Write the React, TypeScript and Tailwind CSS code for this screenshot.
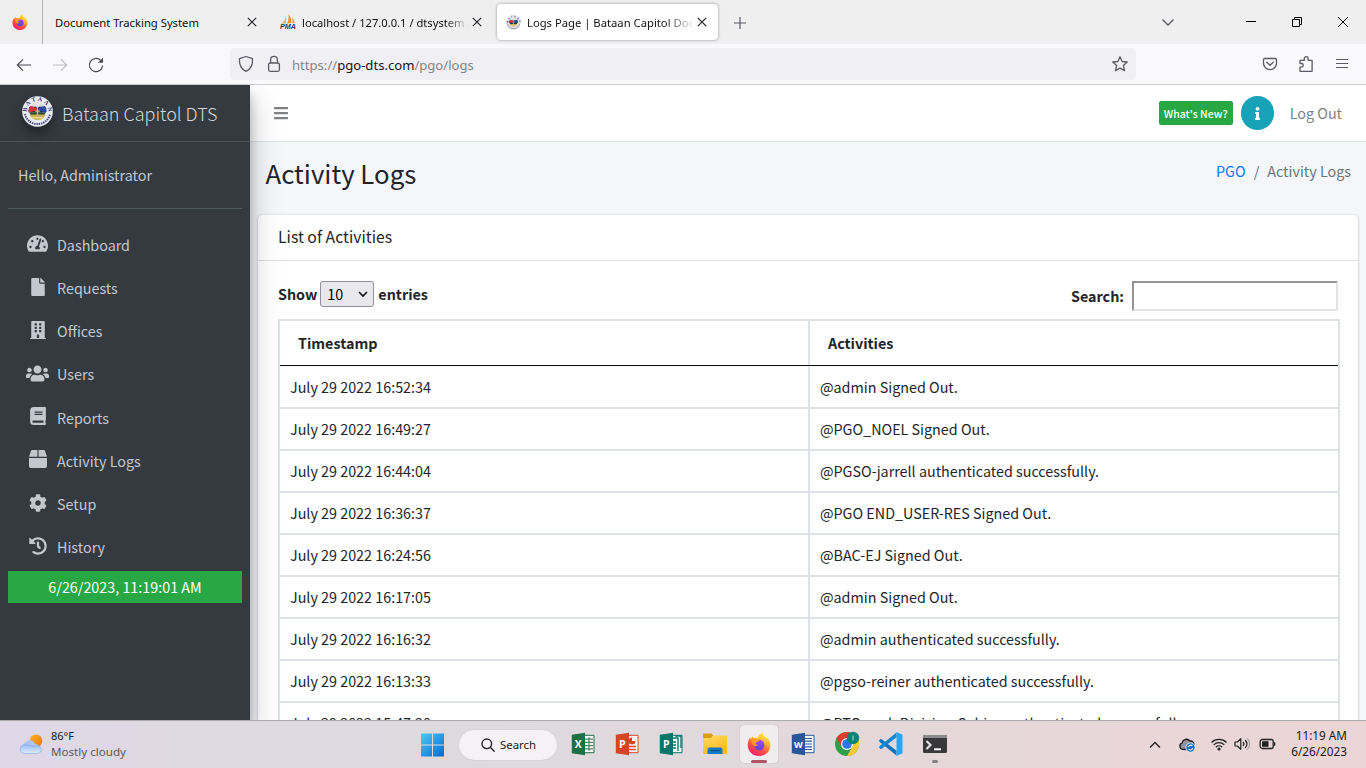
import type { ReactNode } from "react";
import {
  FaBars, FaBook, FaBox, FaBuilding, FaCog, FaFile, FaHistory, FaInfo, FaTachometerAlt, FaUsers,
} from "react-icons/fa";

const logs: [string, string][] = [
  ["July 29 2022 16:52:34", "@admin Signed Out."],
  ["July 29 2022 16:49:27", "@PGO_NOEL Signed Out."],
  ["July 29 2022 16:44:04", "@PGSO-jarrell authenticated successfully."],
  ["July 29 2022 16:36:37", "@PGO END_USER-RES Signed Out."],
  ["July 29 2022 16:24:56", "@BAC-EJ Signed Out."],
  ["July 29 2022 16:17:05", "@admin Signed Out."],
  ["July 29 2022 16:16:32", "@admin authenticated successfully."],
  ["July 29 2022 16:13:33", "@pgso-reiner authenticated successfully."],
  ["July 29 2022 15:47:20", "@PTO-cash Division-Sabina authenticated successfully."],
];

const menu: [string, ReactNode][] = [
  ["Dashboard", <FaTachometerAlt size={21} />],
  ["Requests", <FaFile size={18} />],
  ["Offices", <FaBuilding size={18} />],
  ["Users", <FaUsers size={23} />],
  ["Reports", <FaBook size={18} />],
  ["Activity Logs", <FaBox size={18} />],
  ["Setup", <FaCog size={18} />],
  ["History", <FaHistory size={18} />],
];

function Firefox({ size, id }: { size: number; id: string }) {
  return (
    <svg width={size} height={size} viewBox="0 0 24 24">
      <defs>
        <linearGradient id={id + "a"} x1="0.8" y1="0.05" x2="0.25" y2="1">
          <stop offset="0" stopColor="#fff04a" />
          <stop offset="0.32" stopColor="#ffb52e" />
          <stop offset="0.6" stopColor="#ff5a36" />
          <stop offset="1" stopColor="#f0187c" />
        </linearGradient>
        <linearGradient id={id + "b"} x1="0.6" y1="0" x2="0.4" y2="1">
          <stop offset="0" stopColor="#a34bea" />
          <stop offset="1" stopColor="#5b43d8" />
        </linearGradient>
      </defs>
      <path d="M15.6.6c-.5 2.3 2.4 3.5 4.2 6.1-.1-.9-.4-1.7-.8-2.3 2.7 2 4.4 5.2 4.4 8.8C23.4 19.200 18.400 24 12 24S.7 19.200.7 13c0-3.200 1.100-5.900 2.700-7.800L3.700 7.400l1.800-3.200.8 2.300c1.300-.7 3-.8 4.300-.3C11.700 3.500 13.400 1.400 15.600.6z" fill={`url(#${id}a)`} />
      <circle cx="12.200" cy="13" r="5.200" fill={`url(#${id}b)`} />
      <path d="M3.900 7.200c2.100-.9 4.300-.4 5.500.7 1.300-.3 2.800 0 3.400.6-1.200 1.400-3.500 1.500-4.200 2.800-.4.900.9 1.600 2.300 1.400-.6 1.200-2.300 1.600-3.900 1.100C5.500 12.600 4.300 9.800 3.900 7.200z" fill="#ff9a22" />
    </svg>
  );
}

function Seal({ size, id }: { size: number; id: string }) {
  return (
    <svg width={size} height={size} viewBox="0 0 32 32">
      <defs>
        <path id={id + "t"} d="M5.100 17.500a11 11 0 1 1 21.800 0" />
        <path id={id + "u"} d="M2.200 17a13.800 13.800 0 0 0 27.600 0" />
        <clipPath id={id + "c"}><circle cx="16" cy="15.600" r="9.200" /></clipPath>
      </defs>
      <circle cx="16" cy="16" r="15.800" fill="#e9eaf0" />
      <text fontFamily="Liberation Serif, serif" fontSize="6.300" fontWeight="700" fill="#2b3272"><textPath href={`#${id}t`} textLength="35" startOffset="1">BATAAN</textPath></text>
      <path d="M3 18.500a13.300 13.300 0 0 0 26 0" fill="none" stroke="#434a80" strokeWidth="2" strokeDasharray="1.500 .9" />
      <g clipPath={`url(#${id}c)`}>
        <path d="M6 6h20v20H6z" fill="#dadbd9" />
        <path d="M6 11h20v6H6z" fill="#1d2c46" />
        <path d="M6 9.500 14.500 12 16 15 6 17z" fill="#d9333a" />
        <path d="M26 9.500 17.500 12 16 15l10 2z" fill="#2a49a6" />
        <path d="M8 17h16l-1 3H9z" fill="#23453a" />
        <path d="M10.500 5h11L16 13z" fill="#e6e4dc" />
        <path d="M7 19h18v5l-9 3-9-3z" fill="#c9b25a" />
        <path d="M9 22.500h14" stroke="#ece0a2" strokeWidth="1.100" />
        <path d="M16 12v9M13.500 15.500h5" stroke="#d8bd58" strokeWidth="1.300" />
      </g>
    </svg>
  );
}

function PhpMyAdmin() {
  return (
    <svg width="16" height="16" viewBox="0 0 16 16">
      <path d="M6 1c-.2 3.500-2 6.500-4.800 9L6 9.300z" fill="#f6b46b" />
      <path d="M8.500 0c2 2.400 3 5.500 3 9L7.200 9.400C8.400 6.500 8.800 3 8.500 0z" fill="#f79422" />
      <path d="M12.200 3.200c1.600 1.600 2.400 3.600 2.700 5.900l-2.600.3c.3-2.200.3-4.200-.1-6.200z" fill="#f9a84a" />
      <text x="0" y="15.300" fontFamily="Liberation Sans, sans-serif" fontSize="6.500" fontWeight="700" fontStyle="italic" textLength="16" lengthAdjust="spacingAndGlyphs" fill="#33375f">PMA</text>
    </svg>
  );
}

function Cross() {
  return (
    <svg width="10" height="10" viewBox="0 0 10 10" className="shrink-0">
      <path d="M.8.8l8.400 8.400M9.200.8.8 9.200" stroke="#1c1b22" strokeWidth="1.100" fill="none" />
    </svg>
  );
}

function BrowserTabs() {
  return (
    <div className="flex h-11 shrink-0 items-center bg-[#efefef] text-[11.25px] text-[#111]">
      <div className="flex h-11 w-[43px] items-center border-r border-[#b5b5b6] pl-3">
        <Firefox size={16} id="ft" />
      </div>
      <div className="flex w-[227px] items-center pl-3 pr-[13px]">
        <span className="grow whitespace-nowrap pt-[2px]">Document Tracking System</span>
        <Cross />
      </div>
      <div className="flex w-[227px] items-center pl-[10px] pr-[15px]">
        <PhpMyAdmin />
        <div className="ml-[6px] w-[168px] overflow-hidden whitespace-nowrap bg-gradient-to-r from-[#111] from-85% to-transparent bg-clip-text pt-[2px] text-[11.18px] text-transparent">localhost / 127.0.0.1 / dtsystem /</div>
        <span className="ml-[2px]"><Cross /></span>
      </div>
      <div className="flex h-9 w-[221px] items-center rounded bg-white pl-[9px] shadow-[0_0_3px_rgba(0,0,0,0.4)]">
        <Seal size={15} id="st" />
        <div className="ml-[6px] w-[168px] overflow-hidden whitespace-nowrap bg-gradient-to-r from-[#111] from-82% to-transparent bg-clip-text pt-[2px] text-transparent">Logs Page | Bataan Capitol Document</div>
        <span className="ml-[2px]"><Cross /></span>
      </div>
      <svg width="12" height="12" viewBox="0 0 12 12" className="ml-4 mt-[2px]"><path d="M6 0v12M0 6h12" stroke="#5b5b66" strokeWidth="1.200" /></svg>
      <svg width="12" height="7" viewBox="0 0 12 7" className="ml-auto"><path d="M.5.500 6 6 11.500.5" stroke="#5b5b66" strokeWidth="1.300" fill="none" /></svg>
      <svg width="10" height="10" viewBox="0 0 10 10" className="ml-[72px]"><path d="M0 4.500h10" stroke="#000" /></svg>
      <svg width="10" height="10" viewBox="0 0 10 10" className="ml-9"><path d="M.5 2.500h7v7h-7zM2.500 2.500v-2h7v7h-2" stroke="#000" fill="none" /></svg>
      <svg width="10" height="10" viewBox="0 0 10 10" className="ml-9 mr-[18px]"><path d="M0 0l10 10M10 0 0 10" stroke="#000" fill="none" /></svg>
    </div>
  );
}

function AddressBar() {
  return (
    <div className="flex h-[41px] shrink-0 items-center border-b border-[#cccccf] bg-[#f9f9fb] text-[#5b5b66]">
      <svg width="16" height="16" viewBox="0 0 16 16" className="ml-4 mt-px" fill="none" stroke="#4a4953" strokeWidth="1.200"><path d="M15 8H1.500M7 2.300 1.300 8 7 13.700" /></svg>
      <svg width="16" height="16" viewBox="0 0 16 16" className="ml-5 mt-px" fill="none" stroke="#bdbdc3" strokeWidth="1.200"><path d="M1 8h13.500M9 2.300 14.700 8 9 13.700" /></svg>
      <svg width="16" height="16" viewBox="0 0 16 16" className="ml-5 mt-px" fill="none" stroke="#4a4953" strokeWidth="1.200"><path d="M14.600 8.500A6.600 6.600 0 1 1 12.700 3.400" /><path d="M15 .8v5h-5z" fill="#4a4953" stroke="none" /></svg>
      <div className="ml-[126px] flex h-8 w-[906px] items-center rounded bg-[#f0eff4] pl-2">
        <svg width="16" height="18" viewBox="0 0 16 18" fill="none" stroke="#5b5b66" strokeWidth="1.300" strokeLinejoin="round"><path d="M8 1.500 14.500 3.700c.4 5.300-1.500 10.300-6.500 12.600C3 14 1.100 9 1.500 3.700z" /></svg>
        <svg width="14" height="18" viewBox="0 0 14 18" className="ml-[13px]" fill="none" stroke="#5b5b66" strokeWidth="1.300"><rect x="1.600" y="8" width="10.800" height="8.300" rx="1.500" /><path d="M3.600 8V4.800a3.400 3.400 0 0 1 6.800 0V8" /></svg>
        <span className="ml-[11px] pt-[3px] text-[13.1px] text-[#85858c]">https://<span className="text-[#15141a]">pgo-dts.com</span>/pgo/logs</span>
        <svg width="18" height="18" viewBox="0 0 18 18" className="ml-auto mr-[7px]" fill="none" stroke="#5b5b66" strokeWidth="1.300" strokeLinejoin="round"><path d="m9 1.800 2.100 4.700 5.100.5-3.800 3.500 1.100 5.200L9 13.100l-4.500 2.600 1.100-5.200L1.800 7l5.100-.5z" /></svg>
      </div>
      <svg width="16" height="16" viewBox="0 0 16 16" className="ml-[126px]" fill="none" stroke="#5b5b66" strokeWidth="1.300" strokeLinecap="round" strokeLinejoin="round"><path d="M2.700 2.500h10.600c.7 0 1.200.5 1.200 1.200v3.500a6.500 6.500 0 0 1-13 0V3.700c0-.7.500-1.200 1.200-1.200z" /><path d="m4.800 6.300 3.200 3 3.200-3" /></svg>
      <svg width="16" height="18" viewBox="0 0 16 18" className="ml-5" fill="none" stroke="#5b5b66" strokeWidth="1.300" strokeLinejoin="round"><path d="M2 16.300v-4.200h1.500a1.700 1.700 0 0 0 0-3.600H2V5.300h4.300V3.600a1.900 1.900 0 0 1 3.800 0v1.700h4v11z" /></svg>
      <svg width="14" height="12" viewBox="0 0 14 12" className="ml-[21px]"><path d="M1 1.500h12M1 5.500h12M1 9.500h12" stroke="#5b5b66" strokeWidth="1.200" /></svg>
    </div>
  );
}

function Sidebar() {
  return (
    <aside className="relative z-10 flex w-[250px] shrink-0 flex-col bg-[#353a41] text-[14.33px] text-[#c2c7d0] shadow-[0_14px_28px_rgba(0,0,0,0.25),0_10px_10px_rgba(0,0,0,0.22)]">
      <div className="flex h-[57px] shrink-0 items-start border-b border-[#4b545c] pl-[22px] pt-[11px]">
        <span className="rounded-full shadow-[0_7px_12px_rgba(0,0,0,0.35)]"><Seal size={31} id="sb" /></span>
        <span className="ml-[9px] mt-[2px] whitespace-nowrap text-[18px] font-light leading-[30px] text-[#d5d7db]">Bataan Capitol DTS</span>
      </div>
      <div className="mx-2 flex h-[67px] shrink-0 items-center border-b border-[#4f5962] pl-[10px]">
        <span>Hello, Administrator</span>
      </div>
      <nav className="mx-2 mt-[15.7px] flex flex-col gap-[3.17px]">
        {menu.map(([label, icon]) => (
          <div key={label} className="flex h-10 items-center pl-4">
            <span className="flex w-[27px] justify-center pb-[2px]">{icon}</span>
            <span className="ml-[6px]">{label}</span>
          </div>
        ))}
      </nav>
      <div className="mx-2 mt-1 flex h-8 items-center justify-center bg-[#28a745] text-white">6/26/2023, 11:19:01 AM</div>
    </aside>
  );
}

function Main() {
  return (
    <main className="flex min-w-0 grow flex-col bg-[#f4f6f9] text-[14.33px] text-[#212529]">
      <div className="flex h-[57px] shrink-0 items-center border-b border-[#dee2e6] bg-white pl-[23px] pr-6 text-[#808182]">
        <FaBars size={16} />
        <span className="ml-auto flex h-6 w-[74px] items-center justify-center whitespace-nowrap rounded-[2px] bg-[#28a745] pt-px text-[10.5px] font-medium text-white">What&apos;s New?</span>
        <span className="ml-2 flex h-[34px] w-[33px] items-center justify-center rounded-full bg-[#17a2b8] text-white"><FaInfo size={13} /></span>
        <span className="ml-4">Log Out</span>
      </div>
      <div className="flex h-[73px] shrink-0 justify-between pl-[15.5px] pr-[15px]">
        <h1 className="mt-[13px] text-[25.8px] leading-9">Activity Logs</h1>
        <div className="mt-[17px] flex gap-2 leading-6 text-[#6c757d]">
          <span className="text-[#007bff]">PGO</span><span>/</span><span>Activity Logs</span>
        </div>
      </div>
      <section className="ml-2 mr-2 flex grow flex-col rounded-t bg-white shadow-[0_0_1px_rgba(0,0,0,0.25),0_1px_3px_rgba(0,0,0,0.2)]">
        <h3 className="flex h-[46px] shrink-0 items-center border-b border-[#dfdfdf] pb-px pl-5 text-[15.75px]">List of Activities</h3>
        <div className="flex h-[58px] shrink-0 justify-between pl-5 pr-5 font-bold">
          <div className="mt-5 flex h-[26px] items-center gap-[3px]">
            <span>Show</span>
            <span className="flex h-[26px] w-[54px] items-center justify-between rounded-[3px] border border-[#8f8f9d] bg-[#e9e9ed] pl-[6px] pr-[5px] font-normal text-black">
              10
              <svg width="10" height="7" viewBox="0 0 10 7"><path d="M1 1l4 4 4-4" stroke="#111" strokeWidth="1.600" fill="none" /></svg>
            </span>
            <span className="ml-px">entries</span>
          </div>
          <div className="mt-5 flex h-[30px] items-center gap-2">
            <span>Search:</span>
            <span className="h-[30px] w-[206px] border-2 border-b-[#e3e3e3] border-l-[#949494] border-r-[#e3e3e3] border-t-[#949494] bg-white" />
          </div>
        </div>
        <div className="ml-5 mr-[18px] border-x-2 border-t-2 border-[#dee2e6]">
          <div className="flex h-[45px] border-b border-b-[#111] font-bold">
            <div className="flex w-[530px] items-center border-r-2 border-[#dee2e6] pl-[18px]">Timestamp</div>
            <div className="flex items-center pl-[18px]">Activities</div>
          </div>
          <div className="border-t border-[#f0f2f4]">
            {logs.map(([time, text], i) => (
              <div key={i} className="flex h-[42px] border-b-2 border-[#dee2e6]">
                <div className="flex w-[530px] items-center border-r-2 border-[#dee2e6] pl-[10px]">{time}</div>
                <div className="flex items-center whitespace-nowrap pl-[10px]">{text}</div>
              </div>
            ))}
          </div>
        </div>
      </section>
    </main>
  );
}

function OfficeIcon({ letter, color, children }: { letter: string; color: string; children: ReactNode }) {
  return (
    <svg width="24" height="24" viewBox="0 0 24 24">
      <path d="M12 3.300h11v17.400H12z" fill="#fff" stroke={color} strokeWidth="1" />
      {children}
      <path d="M.8 2.700 14 .8v22.400L.8 21.300z" fill={color} />
      <text x="7.300" y="15.800" textAnchor="middle" fontFamily="Open Sans, sans-serif" fontWeight="700" fontSize={letter === "W" ? 9 : 10.5} fill="#fff">{letter}</text>
    </svg>
  );
}

function Taskbar() {
  return (
    <footer className="relative z-20 flex h-12 shrink-0 items-center border-t border-[#aaa9ad] bg-gradient-to-r from-[#dfd7e6] via-[#dddade] via-35% to-[#ecd5d6] text-[11.6px] text-[#1b1b1b]">
      <svg width="26" height="24" viewBox="0 0 26 24" className="ml-[18px]">
        <defs>
          <linearGradient id="sun" x1="0" y1="0" x2="1" y2="1"><stop offset="0" stopColor="#f6b81c" /><stop offset="1" stopColor="#ee7410" /></linearGradient>
          <linearGradient id="cloud" x1="0" y1="0" x2="0" y2="1"><stop offset="0" stopColor="#9cbdf0" /><stop offset="1" stopColor="#dceafb" /></linearGradient>
        </defs>
        <circle cx="18" cy="7.800" r="6.300" fill="url(#sun)" />
        <path d="M6 16a6.200 6.200 0 0 1 11.500-5A5 5 0 0 1 22 17H6z" fill="#a9c4f1" />
        <path d="M6 20.500a4.500 4.500 0 0 1-.5-8.800c1.800-.4 3 .2 3.800 1.100 2-1.200 4.600-.4 5.600 1.400 1.300-1.200 3-1.700 5-1.300a3.900 3.900 0 0 1 .6 7.600z" fill="url(#cloud)" stroke="#7fa5e4" strokeWidth=".6" />
      </svg>
      <div className="-mt-[2px] ml-[7px] w-[364px] leading-4">
        <div className="text-[11px]">86°F</div>
        <div className="text-[11.6px] text-[#5c5962]">Mostly cloudy</div>
      </div>
      <svg width="24" height="24" viewBox="0 0 24 24" className="ml-[5px] shrink-0">
        <defs><linearGradient id="win" x1="0" y1="0" x2="1" y2="1"><stop offset="0" stopColor="#4cc9fb" /><stop offset="1" stopColor="#0869cc" /></linearGradient></defs>
        <path d="M1 .5h11v11H1zM13 .5h11v11H13zM1 12.500h11v11H1zM13 12.500h11v11H13z" fill="url(#win)" />
      </svg>
      <div className="ml-[15px] flex h-[30px] w-[98px] shrink-0 items-center rounded-full bg-[#f5f2f5] pl-[22px] shadow-[0_0_1px_rgba(0,0,0,0.2)]">
        <svg width="14" height="14" viewBox="0 0 14 14" fill="none" stroke="#222" strokeWidth="1.400"><circle cx="5.800" cy="5.800" r="4.800" /><path d="m9.300 9.300 4.300 4.300" /></svg>
        <span className="ml-[5px] text-[11.4px]">Search</span>
      </div>
      <div className="-mt-px ml-[14px] flex shrink-0 items-center">
        <OfficeIcon letter="X" color="#1d7044">
          <path d="M14 7.200h8M14 10.400h8M14 13.600h8M14 16.800h8M18 5v14" stroke="#3b8a5f" strokeWidth="1.200" />
        </OfficeIcon>
        <span className="w-5" />
        <OfficeIcon letter="P" color="#d24625">
          <circle cx="17" cy="9" r="3.500" fill="#d24625" /><path d="M17 9V5.500A3.500 3.500 0 0 1 20.500 9z" fill="#fff" /><path d="M14 14.500h7M14 17.500h7" stroke="#d24625" strokeWidth="1.400" />
        </OfficeIcon>
        <span className="w-5" />
        <OfficeIcon letter="P" color="#077568">
          <path d="M13 6h6v13M16 4h6v12M14 10h3M14 13h3M14 16h3" stroke="#077568" strokeWidth="1.400" fill="none" />
        </OfficeIcon>
        <svg width="26" height="24" viewBox="0 0 26 24" className="ml-[19px]">
          <defs><linearGradient id="fold" x1="0" y1="0" x2="0.4" y2="1"><stop offset="0" stopColor="#ffdb63" /><stop offset="1" stopColor="#fbb91f" /></linearGradient></defs>
          <path d="M1 1.500h8.500L11.500 4H20v4H1z" fill="#dd9d10" />
          <path d="M1 6h8l2-2.500h14V21a1 1 0 0 1-1 1H2a1 1 0 0 1-1-1z" fill="url(#fold)" />
          <path d="M5.500 22v-4.500a2 2 0 0 1 2-2h11a2 2 0 0 1 2 2V22z" fill="#1478c9" /><path d="M8.500 18.600h9" stroke="#0c559c" strokeWidth="1.300" />
        </svg>
      </div>
      <div className="-mt-px ml-[12px] flex h-[38px] w-[38px] shrink-0 flex-col items-center rounded bg-[#f1ecee] pt-[7px] shadow-[0_0_1px_rgba(0,0,0,0.3)]">
        <Firefox size={24} id="fb" />
        <span className="mt-[4px] h-[3px] w-4 rounded-full bg-[#b05568]" />
      </div>
      <div className="-mt-px ml-[13px] flex shrink-0 items-center">
        <OfficeIcon letter="W" color="#2a5699">
          <path d="M14 6.500h7M14 9.200h7M14 12h7M14 14.800h7M14 17.500h7" stroke="#2a5699" strokeWidth="1.200" />
        </OfficeIcon>
        <svg width="26" height="26" viewBox="0 0 26 26" className="ml-[19px]">
          <circle cx="13" cy="13" r="12" fill="#2f9e4b" />
          <path d="M13 13 2.600 7A12 12 0 0 1 23.400 7z" fill="#e33b2e" />
          <path d="M2.600 7 7.800 16 13 13V7z" fill="#e33b2e" />
          <path d="M13 7h10.400A12 12 0 0 1 13 25l5.200-9z" fill="#fcc934" />
          <circle cx="13" cy="13" r="6" fill="#fff" /><circle cx="13" cy="13" r="4.800" fill="#2f74e8" />
          <circle cx="19" cy="7" r="6.200" fill="#0b8473" /><path d="M19 4.500v5" stroke="#9bd0c8" strokeWidth="1.200" />
        </svg>
        <svg width="26" height="26" viewBox="0 0 26 26" className="ml-[18px]">
          <path d="M1 9.500 3 7.800l15.500 12v4.700L1.500 10.800z" fill="#0b73bd" />
          <path d="M1 16.500 3 18.200l15.500-12V1.500L1.500 15.200z" fill="#1286d0" />
          <path d="M18.500 1 24.500 3.700v18.600L18.500 25z" fill="#2aa5f2" />
        </svg>
        <svg width="26" height="26" viewBox="0 0 26 26" className="ml-[18px]">
          <rect x="1" y="4" width="24" height="18" rx="1.500" fill="#38383a" />
          <path d="M1 7V5.500A1.500 1.500 0 0 1 2.500 4h21A1.500 1.500 0 0 1 25 5.500V7z" fill="#8b8b8d" />
          <path d="m4.500 10 4 4-4 4" stroke="#ddd" strokeWidth="2.200" fill="none" /><path d="M12 18.300h7" stroke="#fff" strokeWidth="2" />
        </svg>
        <span className="relative"><span className="absolute -left-4 top-[16px] h-[3px] w-[6px] rounded-full bg-[#858085]" /></span>
      </div>
      <div className="ml-auto flex shrink-0 items-center">
        <svg width="12" height="8" viewBox="0 0 12 8"><path d="m1 6.500 5-5 5 5" stroke="#222" strokeWidth="1.300" fill="none" /></svg>
        <svg width="18" height="16" viewBox="0 0 18 16" className="ml-[17px]">
          <path d="M4.500 12.300a3.400 3.400 0 0 1-.4-6.500C5 2.500 9.200.8 12 4c2.500-.2 4 1.400 4 3.500l-7 5z" fill="#929094" stroke="#1b1b1b" strokeWidth="1.300" />
          <circle cx="12.500" cy="10.500" r="5" fill="#f4edf0" /><circle cx="12.500" cy="10.500" r="4.200" fill="#1b6fc7" />
          <path d="M10.200 10a2.400 2.400 0 0 1 4.200-1M14.800 11a2.400 2.400 0 0 1-4.200 1" stroke="#fff" strokeWidth="1.100" fill="none" />
        </svg>
        <svg width="18" height="14" viewBox="0 0 18 14" className="-mt-[2px] ml-[14px]" fill="none" stroke="#222" strokeWidth="1.200">
          <path d="M1.500 5.500a10.500 10.500 0 0 1 15 0M3.700 7.900a7.500 7.500 0 0 1 10.600 0M5.900 10.200a4.400 4.400 0 0 1 6.200 0" /><circle cx="9" cy="12" r="1" fill="#222" />
        </svg>
        <svg width="17" height="14" viewBox="0 0 17 14" className="-mt-[2px] ml-[6px]" fill="none" stroke="#222" strokeWidth="1.200">
          <path d="M1 5h2.300l3.500-3.300v10.600L3.300 9H1z" strokeLinejoin="round" /><path d="M9 5a3 3 0 0 1 0 4M11.200 3a5.600 5.600 0 0 1 0 8" /><path d="M13.300 1.200a8.500 8.500 0 0 1 0 11.600" stroke="#aaa4a7" />
        </svg>
        <svg width="17" height="12" viewBox="0 0 17 12" className="-mt-[2px] ml-[8px]"><rect x="1.200" y="1.500" width="13" height="9" rx="2" fill="none" stroke="#222" strokeWidth="1.300" /><path d="M3 3.200h6.500v5.600H3z" fill="#222" /><path d="M15.500 4.200v3.600" stroke="#222" strokeWidth="1.500" /></svg>
      </div>
      <div className="-mt-[3px] ml-[15px] mr-[19px] w-14 shrink-0 whitespace-nowrap text-right text-[11.75px] leading-4">
        <div>11:19 AM</div>
        <div>6/26/2023</div>
      </div>
    </footer>
  );
}

export default function App() {
  return (
    <div className="flex h-[768px] w-[1366px] flex-col overflow-hidden font-['Noto_Sans',sans-serif]">
      <BrowserTabs />
      <AddressBar />
      <div className="flex min-h-0 grow overflow-hidden font-['Noto_Sans_CJK_SC',sans-serif]">
        <Sidebar />
        <Main />
      </div>
      <Taskbar />
    </div>
  );
}
